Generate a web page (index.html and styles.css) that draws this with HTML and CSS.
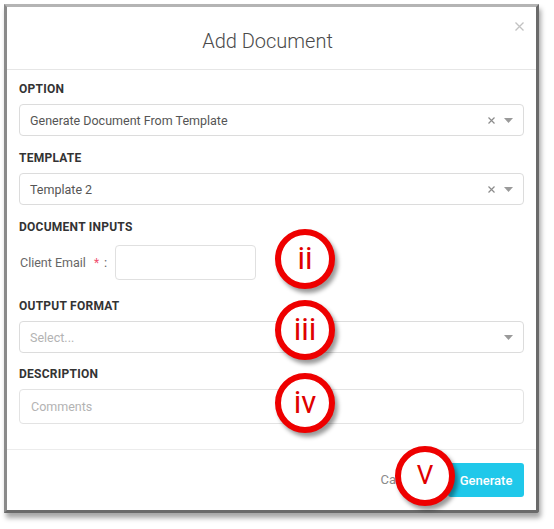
FILE: index.html
```html
<!DOCTYPE html>
<html lang="en">
<head>
<meta charset="utf-8">
<title>Add Document</title>
<link rel="stylesheet" href="styles.css">
</head>
<body>
<div class="window">
  <div class="modal-header">
    <h1 class="modal-title">Add Document</h1>
    <button class="close-btn" aria-label="Close">
      <svg width="9" height="9" viewBox="0 0 9 9"><path d="M0.5 0.5L8.5 8.5M8.5 0.5L0.5 8.5" stroke="#c2c2c2" stroke-width="1.3" fill="none"/></svg>
    </button>
  </div>
  <div class="modal-body">
    <div class="group">
      <div class="label">OPTION</div>
      <div class="select">
        <span class="select-value">Generate Document From Template</span>
        <span class="select-icons">
          <svg class="clear" width="7" height="7" viewBox="0 0 7 7"><path d="M0.5 0.5L6.5 6.5M6.5 0.5L0.5 6.5" stroke="#8c8c8c" stroke-width="1.2" fill="none"/></svg>
          <svg class="caret" width="9" height="5" viewBox="0 0 9 5"><path d="M0 0H9L4.5 5Z" fill="#9a9a9a"/></svg>
        </span>
      </div>
    </div>
    <div class="group">
      <div class="label">TEMPLATE</div>
      <div class="select">
        <span class="select-value">Template 2</span>
        <span class="select-icons">
          <svg class="clear" width="7" height="7" viewBox="0 0 7 7"><path d="M0.5 0.5L6.5 6.5M6.5 0.5L0.5 6.5" stroke="#8c8c8c" stroke-width="1.2" fill="none"/></svg>
          <svg class="caret" width="9" height="5" viewBox="0 0 9 5"><path d="M0 0H9L4.5 5Z" fill="#9a9a9a"/></svg>
        </span>
      </div>
    </div>
    <div class="group">
      <div class="label label-inputs">DOCUMENT INPUTS</div>
      <div class="input-row">
        <span class="field-label">Client Email</span>
        <span class="req">*</span>
        <span class="colon">:</span>
        <div class="text-input"></div>
      </div>
    </div>
    <div class="group group-output">
      <div class="label">OUTPUT FORMAT</div>
      <div class="select">
        <span class="select-value placeholder">Select...</span>
        <span class="select-icons">
          <svg class="caret" width="9" height="5" viewBox="0 0 9 5"><path d="M0 0H9L4.5 5Z" fill="#9a9a9a"/></svg>
        </span>
      </div>
    </div>
    <div class="group">
      <div class="label">DESCRIPTION</div>
      <div class="comments"><span class="placeholder">Comments</span></div>
    </div>
  </div>
  <div class="modal-footer">
    <span class="cancel">Cancel</span>
    <button class="generate">Generate</button>
  </div>

  <div class="callout c-ii"><span>ii</span></div>
  <div class="callout c-iii"><span>iii</span></div>
  <div class="callout c-iv"><span>iv</span></div>
  <div class="callout c-v"><span>V</span></div>
</div>
</body>
</html>
```
FILE: styles.css
```css
* { box-sizing: border-box; }
html, body { margin: 0; padding: 0; background: #fff; }
body {
  font-family: Roboto, "Liberation Sans", Arial, sans-serif;
  width: 554px;
  height: 529px;
  overflow: hidden;
}
.window {
  position: relative;
  margin: 4px 0 0 4px;
  width: 535px;
  height: 509px;
  background: #fff;
  border-top: 3px solid #b4b4b4;
  border-left: 3px solid #8a8a8a;
  border-right: 3px solid #6a6a6a;
  border-bottom: 3px solid #6a6a6a;
  border-radius: 0 0 3px 0;
  box-shadow: 2px 5px 5px rgba(0, 0, 0, 0.35);
  display: flex;
  flex-direction: column;
}
.modal-header {
  position: relative;
  height: 63px;
  border-bottom: 1px solid #e6e6e6;
  display: flex;
  align-items: center;
  justify-content: center;
  padding-right: 8px;
  padding-top: 6px;
}
.modal-title {
  margin: 0;
  font-size: 20px;
  font-weight: 300;
  color: #4a4a4a;
}
.close-btn {
  position: absolute;
  right: 12px;
  top: 15px;
  border: 0;
  background: none;
  padding: 0;
  width: 9px;
  height: 9px;
  display: block;
}
.close-btn svg { display: block; }
.modal-body {
  height: 379px;
  padding: 12px 12px 0 12px;
}
.group { margin-bottom: 15px; }
.label {
  font-size: 12px;
  line-height: 14px;
  font-weight: 700;
  color: #333;
  margin-bottom: 8px;
  letter-spacing: 0.25px;
}
.select {
  height: 32px;
  border: 1px solid #dcdcdc;
  border-radius: 4px;
  display: flex;
  align-items: center;
  padding: 0 10px 0 10px;
}
.select-value {
  flex: 1;
  font-size: 12.5px;
  color: #555;
}
.placeholder { color: #b3b3b3; }
.select-icons {
  display: flex;
  align-items: center;
  gap: 9px;
}
.select-icons svg { display: block; }
.select-icons .caret { margin-top: 1px; }
.label-inputs { margin-bottom: 11px; }
.input-row {
  display: flex;
  align-items: center;
  height: 35px;
}
.field-label { font-size: 12.5px; color: #666; margin-left: 1px; }
.req { color: #f0506e; font-size: 12px; margin-left: 8px; }
.colon { color: #666; font-size: 13px; margin-left: 5px; }
.text-input {
  margin-left: 8px;
  width: 141px;
  height: 35px;
  border: 1px solid #e0e0e0;
  border-radius: 4px;
}
.group-output { margin-top: 19px; margin-bottom: 14px; }
.comments {
  height: 35px;
  border: 1px solid #e3e3e3;
  border-radius: 4px;
  display: flex;
  align-items: center;
  padding-left: 11px;
  font-size: 12.5px;
}
.modal-footer {
  flex: 1;
  border-top: 1px solid #ececec;
  display: flex;
  justify-content: flex-end;
  align-items: flex-start;
  padding: 13px 12px 0 0;
}
.cancel {
  font-size: 13px;
  color: #8a8a8a;
  line-height: 34px;
  margin-right: 28px;
}
.generate {
  width: 76px;
  height: 34px;
  border: 0;
  border-radius: 3px;
  background: #1fc8ea;
  color: #fff;
  font-family: Roboto, "Liberation Sans", Arial, sans-serif;
  font-size: 13px;
  font-weight: 500;
  padding: 0;
}
.callout {
  position: absolute;
  width: 60px;
  height: 60px;
  border-radius: 50%;
  border: 6px solid #ee0000;
  background: #fff;
  box-shadow: 3px 4px 4px rgba(0, 0, 0, 0.4);
  display: flex;
  align-items: center;
  justify-content: center;
  color: #e00000;
  font-family: Roboto, "Liberation Sans", Arial, sans-serif;
  font-size: 31px;
  line-height: 1;
}
.callout span { display: block; margin-top: -2px; }
.c-ii { left: 268px; top: 222px; }
.c-iii { left: 268px; top: 293px; }
.c-iv { left: 268px; top: 366px; }
.c-v { left: 388px; top: 439px; font-size: 26px; }
```
